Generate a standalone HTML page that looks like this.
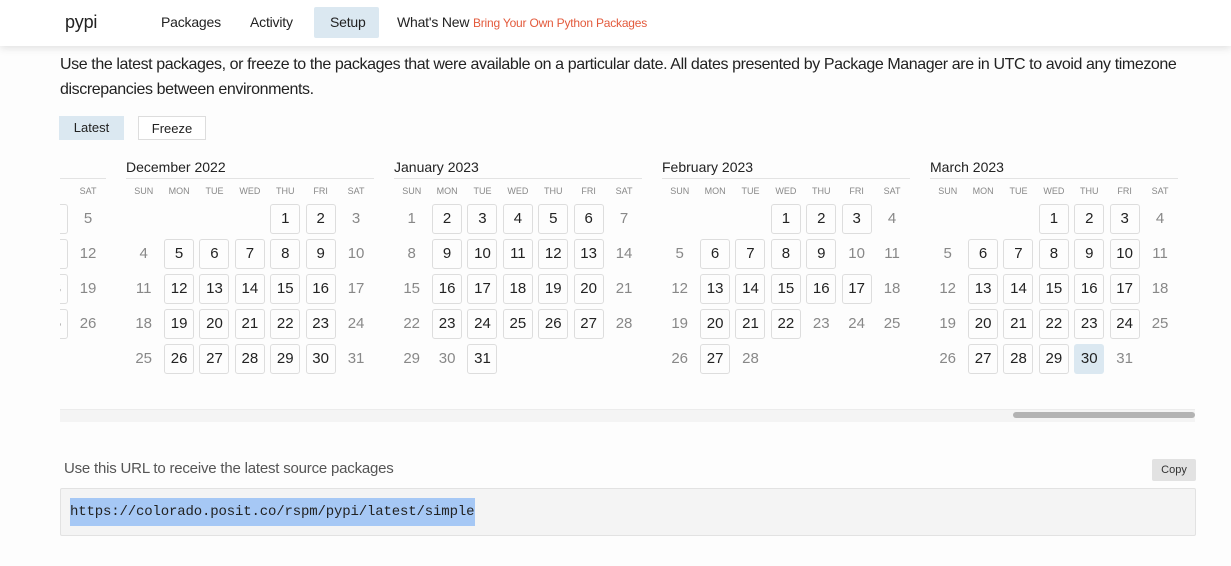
<!DOCTYPE html>
<html><head><meta charset="utf-8"><style>
body{margin:0;width:1231px;height:566px;overflow:hidden;background:#fdfdfd;font-family:"Liberation Sans",sans-serif;color:#222;position:relative}
.hdr{position:absolute;left:0;top:0;width:1231px;height:46px;background:#fff;box-shadow:0 2px 8px rgba(0,0,0,.12);z-index:2}
.ghost{position:absolute;left:60px;top:14px;font-size:30px;color:#f2f2f2;z-index:1}
.hdr span{position:absolute;top:14px;font-size:14px;letter-spacing:-.2px}
.setup{position:absolute;left:314px;top:7px;width:65px;height:31px;background:#dbe8f1;border-radius:2px}
.desc{position:absolute;left:60px;top:52px;font-size:16px;line-height:25px;width:1160px;letter-spacing:-.4px}
.btn{position:absolute;top:116px;height:24px;font-size:13px;line-height:24px;text-align:center;box-sizing:border-box}
.m{position:absolute;top:156px;width:248px}
.t{font-size:14px;height:22px;line-height:22px;border-bottom:1px solid #e3e3e3}
.g{display:grid;grid-template-columns:repeat(7,35.4px)}
.dn{font-size:9px;color:#888;text-align:center;height:22px;line-height:24px}
.g div.c{height:35px;display:flex;align-items:center;justify-content:center;font-size:15px;color:#888}
.g div.c.b span{display:block;width:28px;height:28px;line-height:28px;text-align:center;border:1px solid #ddd;border-radius:3px;color:#222}
.g div.c.s span{display:block;width:30px;height:30px;line-height:30px;text-align:center;background:#dbe8f1;border-radius:3px;color:#222}
.clip{position:absolute;left:60px;top:150px;width:1135px;height:240px;overflow:hidden}
</style></head><body>
<div class="ghost">Repository URL</div>
<div class="hdr">
<span style="left:65px;top:12px;font-size:18px">pypi</span>
<span style="left:161px">Packages</span>
<span style="left:250px">Activity</span>
<div class="setup"></div>
<span style="left:330px">Setup</span>
<span style="left:397px">What's New <span style="position:static;color:#e35a3c;font-size:12px">Bring Your Own Python Packages</span></span>
</div>
<div class="desc">Use the latest packages, or freeze to the packages that were available on a particular date. All dates presented by Package Manager are in UTC to avoid any timezone discrepancies between environments.</div>
<div class="btn" style="left:59px;width:65px;background:#dbe8f1;">Latest</div>
<div class="btn" style="left:138px;width:68px;border:1px solid #ddd;background:#fff">Freeze</div>

<div class="clip">
<div class="m" style="left:-202px;top:6px"><div class="t"></div><div class="g">
<div class="dn">SUN</div><div class="dn">MON</div><div class="dn">TUE</div><div class="dn">WED</div><div class="dn">THU</div><div class="dn">FRI</div><div class="dn">SAT</div>
<div class="c"></div><div class="c"></div><div class="c b"><span>1</span></div><div class="c b"><span>2</span></div><div class="c b"><span>3</span></div><div class="c b"><span>4</span></div><div class="c">5</div>
<div class="c"></div><div class="c"></div><div class="c"></div><div class="c"></div><div class="c"></div><div class="c b"><span>11</span></div><div class="c">12</div>
<div class="c"></div><div class="c"></div><div class="c"></div><div class="c"></div><div class="c"></div><div class="c b"><span>18</span></div><div class="c">19</div>
<div class="c"></div><div class="c"></div><div class="c"></div><div class="c"></div><div class="c"></div><div class="c b"><span>25</span></div><div class="c">26</div>
</div></div>

<div class="m" style="left:66px;top:6px"><div class="t">December 2022</div><div class="g">
<div class="dn">SUN</div><div class="dn">MON</div><div class="dn">TUE</div><div class="dn">WED</div><div class="dn">THU</div><div class="dn">FRI</div><div class="dn">SAT</div>
<div class="c"></div><div class="c"></div><div class="c"></div><div class="c"></div><div class="c b"><span>1</span></div><div class="c b"><span>2</span></div><div class="c">3</div>
<div class="c">4</div><div class="c b"><span>5</span></div><div class="c b"><span>6</span></div><div class="c b"><span>7</span></div><div class="c b"><span>8</span></div><div class="c b"><span>9</span></div><div class="c">10</div>
<div class="c">11</div><div class="c b"><span>12</span></div><div class="c b"><span>13</span></div><div class="c b"><span>14</span></div><div class="c b"><span>15</span></div><div class="c b"><span>16</span></div><div class="c">17</div>
<div class="c">18</div><div class="c b"><span>19</span></div><div class="c b"><span>20</span></div><div class="c b"><span>21</span></div><div class="c b"><span>22</span></div><div class="c b"><span>23</span></div><div class="c">24</div>
<div class="c">25</div><div class="c b"><span>26</span></div><div class="c b"><span>27</span></div><div class="c b"><span>28</span></div><div class="c b"><span>29</span></div><div class="c b"><span>30</span></div><div class="c">31</div>
</div></div>

<div class="m" style="left:334px;top:6px"><div class="t">January 2023</div><div class="g">
<div class="dn">SUN</div><div class="dn">MON</div><div class="dn">TUE</div><div class="dn">WED</div><div class="dn">THU</div><div class="dn">FRI</div><div class="dn">SAT</div>
<div class="c">1</div><div class="c b"><span>2</span></div><div class="c b"><span>3</span></div><div class="c b"><span>4</span></div><div class="c b"><span>5</span></div><div class="c b"><span>6</span></div><div class="c">7</div>
<div class="c">8</div><div class="c b"><span>9</span></div><div class="c b"><span>10</span></div><div class="c b"><span>11</span></div><div class="c b"><span>12</span></div><div class="c b"><span>13</span></div><div class="c">14</div>
<div class="c">15</div><div class="c b"><span>16</span></div><div class="c b"><span>17</span></div><div class="c b"><span>18</span></div><div class="c b"><span>19</span></div><div class="c b"><span>20</span></div><div class="c">21</div>
<div class="c">22</div><div class="c b"><span>23</span></div><div class="c b"><span>24</span></div><div class="c b"><span>25</span></div><div class="c b"><span>26</span></div><div class="c b"><span>27</span></div><div class="c">28</div>
<div class="c">29</div><div class="c">30</div><div class="c b"><span>31</span></div>
</div></div>

<div class="m" style="left:602px;top:6px"><div class="t">February 2023</div><div class="g">
<div class="dn">SUN</div><div class="dn">MON</div><div class="dn">TUE</div><div class="dn">WED</div><div class="dn">THU</div><div class="dn">FRI</div><div class="dn">SAT</div>
<div class="c"></div><div class="c"></div><div class="c"></div><div class="c b"><span>1</span></div><div class="c b"><span>2</span></div><div class="c b"><span>3</span></div><div class="c">4</div>
<div class="c">5</div><div class="c b"><span>6</span></div><div class="c b"><span>7</span></div><div class="c b"><span>8</span></div><div class="c b"><span>9</span></div><div class="c">10</div><div class="c">11</div>
<div class="c">12</div><div class="c b"><span>13</span></div><div class="c b"><span>14</span></div><div class="c b"><span>15</span></div><div class="c b"><span>16</span></div><div class="c b"><span>17</span></div><div class="c">18</div>
<div class="c">19</div><div class="c b"><span>20</span></div><div class="c b"><span>21</span></div><div class="c b"><span>22</span></div><div class="c">23</div><div class="c">24</div><div class="c">25</div>
<div class="c">26</div><div class="c b"><span>27</span></div><div class="c">28</div>
</div></div>

<div class="m" style="left:870px;top:6px"><div class="t">March 2023</div><div class="g">
<div class="dn">SUN</div><div class="dn">MON</div><div class="dn">TUE</div><div class="dn">WED</div><div class="dn">THU</div><div class="dn">FRI</div><div class="dn">SAT</div>
<div class="c"></div><div class="c"></div><div class="c"></div><div class="c b"><span>1</span></div><div class="c b"><span>2</span></div><div class="c b"><span>3</span></div><div class="c">4</div>
<div class="c">5</div><div class="c b"><span>6</span></div><div class="c b"><span>7</span></div><div class="c b"><span>8</span></div><div class="c b"><span>9</span></div><div class="c b"><span>10</span></div><div class="c">11</div>
<div class="c">12</div><div class="c b"><span>13</span></div><div class="c b"><span>14</span></div><div class="c b"><span>15</span></div><div class="c b"><span>16</span></div><div class="c b"><span>17</span></div><div class="c">18</div>
<div class="c">19</div><div class="c b"><span>20</span></div><div class="c b"><span>21</span></div><div class="c b"><span>22</span></div><div class="c b"><span>23</span></div><div class="c b"><span>24</span></div><div class="c">25</div>
<div class="c">26</div><div class="c b"><span>27</span></div><div class="c b"><span>28</span></div><div class="c b"><span>29</span></div><div class="c s"><span>30</span></div><div class="c">31</div>
</div></div>
</div>

<div style="position:absolute;left:60px;top:409px;width:1135px;height:12px;background:#f4f4f4;border-top:1px solid #ececec"></div>
<div style="position:absolute;left:1013px;top:412px;width:182px;height:6px;background:#b3b3b3;border-radius:3px"></div>

<div style="position:absolute;left:64px;top:460px;font-size:15px;color:#555;letter-spacing:-.2px">Use this URL to receive the latest source packages</div>
<div style="position:absolute;left:1152px;top:459px;width:44px;height:22px;background:#e2e2e2;border-radius:2px;font-size:11px;line-height:22px;text-align:center;color:#333">Copy</div>
<div style="position:absolute;left:60px;top:488px;width:1136px;height:48px;box-sizing:border-box;background:#f4f4f4;border:1px solid #e2e2e2;border-radius:2px"></div>
<div style="position:absolute;left:70px;top:498px;width:405px;height:28px;background:#a6c8f5"></div>
<div style="position:absolute;left:70px;top:504px;font-family:'Liberation Mono',monospace;font-size:14px;color:#222;letter-spacing:-.15px">https://colorado.posit.co/rspm/pypi/latest/simple</div>
</body></html>
